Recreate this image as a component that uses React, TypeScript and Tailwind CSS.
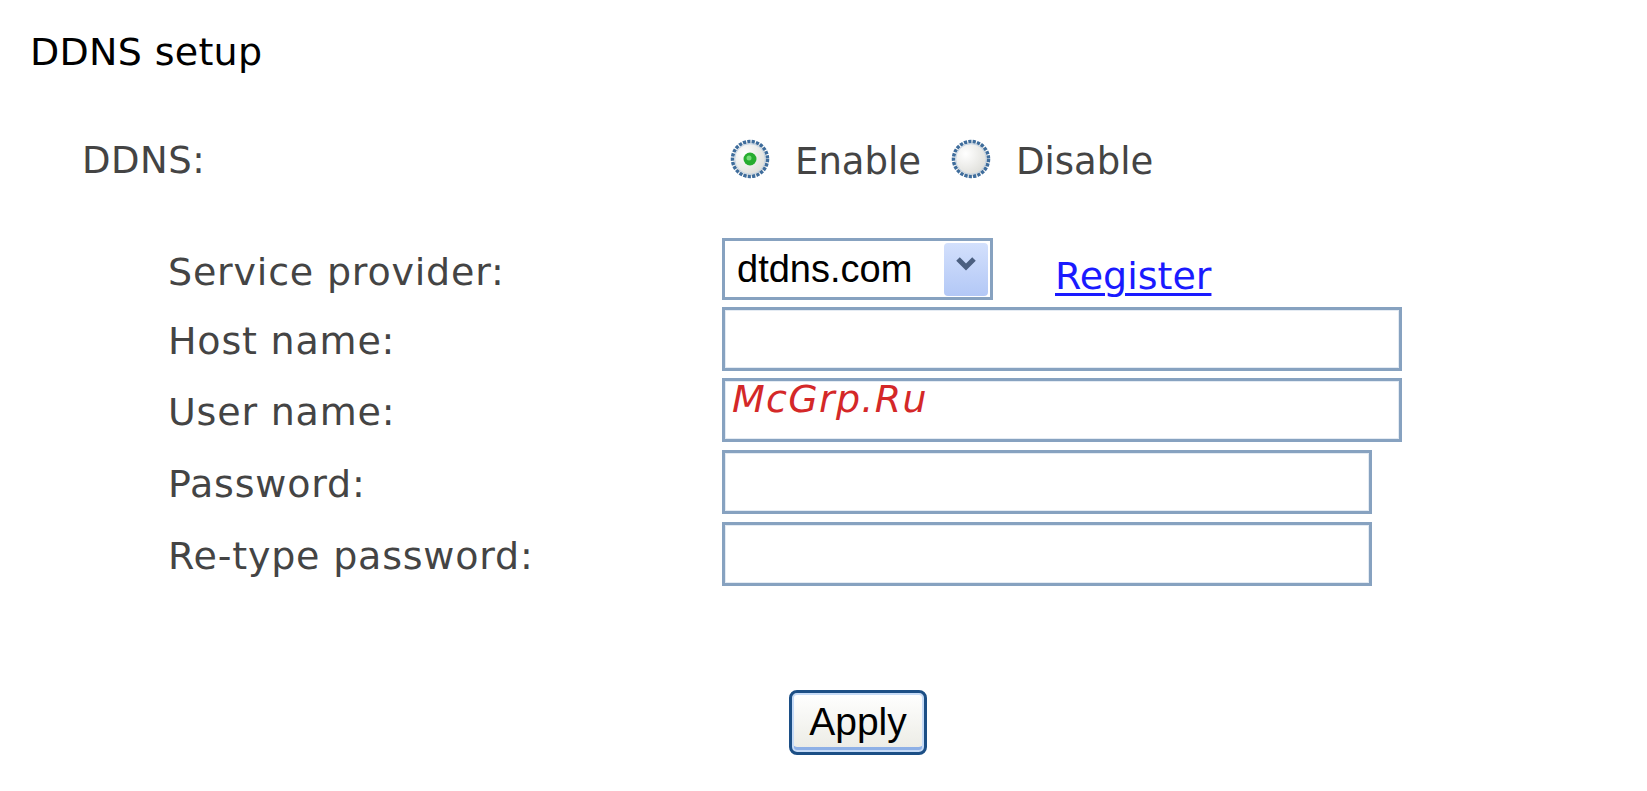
import { ReactNode } from 'react';

const fields = [
  { label: 'Host name:', wide: true, gap: 'mt-[7px]' },
  { label: 'User name:', wide: true, gap: 'mt-[7px]', mark: true },
  { label: 'Password:', wide: false, gap: 'mt-[8px]' },
  { label: 'Re-type password:', wide: false, gap: 'mt-[8px]' },
];

function Radio({ checked }: { checked?: boolean }) {
  const id = checked ? 'rg-on' : 'rg-off';
  return (
    <svg width="40" height="40" viewBox="0 0 40 40" className="shrink-0">
      <defs>
        <radialGradient id={id} cx="0.35" cy="0.35" r="0.8">
          <stop offset="0" stopColor="#ffffff" />
          <stop offset="1" stopColor="#d8d8d2" />
        </radialGradient>
      </defs>
      <circle cx="20" cy="20" r="17.5" fill={`url(#${id})`} stroke="#3f6d9c" strokeWidth="3.5" strokeDasharray="3.2 1.2" />
      <circle cx="20" cy="20" r="15.3" fill="none" stroke="#c3d3e4" strokeWidth="1" />
      {checked && <circle cx="20" cy="20" r="6.5" fill="#27ad30" />}
      {checked && <circle cx="19" cy="19" r="2.5" fill="#74dc77" />}
    </svg>
  );
}

function Row({ label, className, children }: { label: string; className?: string; children: ReactNode }) {
  return (
    <div className={`flex items-start ${className ?? ''}`}>
      <div className="w-[554px] pt-[12px] leading-[44px] text-[38px] tracking-[0.8px] text-[#444]">{label}</div>
      {children}
    </div>
  );
}

export default function App() {
  return (
    <div className="w-[1647px] h-[791px] bg-white font-['DejaVu_Sans',sans-serif] overflow-hidden">
      <h1 className="pt-[30px] pl-[30px] text-[38px] leading-[44px] tracking-[0.3px] text-black font-normal">DDNS setup</h1>

      {/* enable / disable */}
      <div className="mt-[65px] pl-[82px] flex items-start text-[37px] leading-[44px] text-[#444]">
        <div className="w-[648px] tracking-[0.5px]">DDNS:</div>
        <Radio checked />
        <span className="ml-[25px] mt-[1px]">Enable</span>
        <div className="ml-[30px]">
          <Radio />
        </div>
        <span className="ml-[25px] mt-[1px]">Disable</span>
      </div>

      <div className="mt-[54px] pl-[168px]">
        <Row label="Service provider:">
          <div className="flex items-start">
            <div className="w-[271px] h-[62px] border-[3px] border-[#87a2c0] bg-white flex items-center justify-between pl-[12px] pr-[2px]">
              <span className="font-['Liberation_Sans',sans-serif] text-[38px] leading-none text-black">dtdns.com</span>
              <div className="w-[44px] h-[53px] rounded-[4px] bg-gradient-to-b from-[#d3e0fc] to-[#b3c8f6] flex justify-center pt-[13px]">
                <svg width="22" height="16" viewBox="0 0 22 16">
                  <path d="M3 3 L11 11 L19 3" fill="none" stroke="#4b5f80" strokeWidth="5" />
                </svg>
              </div>
            </div>
            <a href="#" className="ml-[62px] mt-[16px] text-[38px] leading-[44px] text-[#1a1aff] underline decoration-[3px] underline-offset-[4px]">
              Register
            </a>
          </div>
        </Row>

        {fields.map((f) => (
          <Row key={f.label} label={f.label} className={f.gap}>
            <div className="relative">
              <div className={`${f.wide ? 'w-[680px]' : 'w-[650px]'} h-[64px] border-[3px] border-[#87a2c0] bg-white shadow-[inset_0_0_0_1px_#e4ebf3]`} />
              {f.mark && (
                <span className="absolute left-[10px] top-[-1px] italic text-[38px] leading-[44px] tracking-[1.3px] text-[#d42828]">
                  McGrp.Ru
                </span>
              )}
            </div>
          </Row>
        ))}
      </div>

      <div className="mt-[104px] pl-[789px]">
        <button className="w-[138px] h-[65px] rounded-[8px] border-[3px] border-[#1c4f86] bg-gradient-to-b from-[#ffffff] to-[#ebebe4] shadow-[inset_0_0_0_2px_#c6dbf7,inset_0_-5px_0_#8eb0e6] font-['Liberation_Sans',sans-serif] text-[39px] leading-none text-black flex items-center justify-center pb-[2px]">
          Apply
        </button>
      </div>
    </div>
  );
}
